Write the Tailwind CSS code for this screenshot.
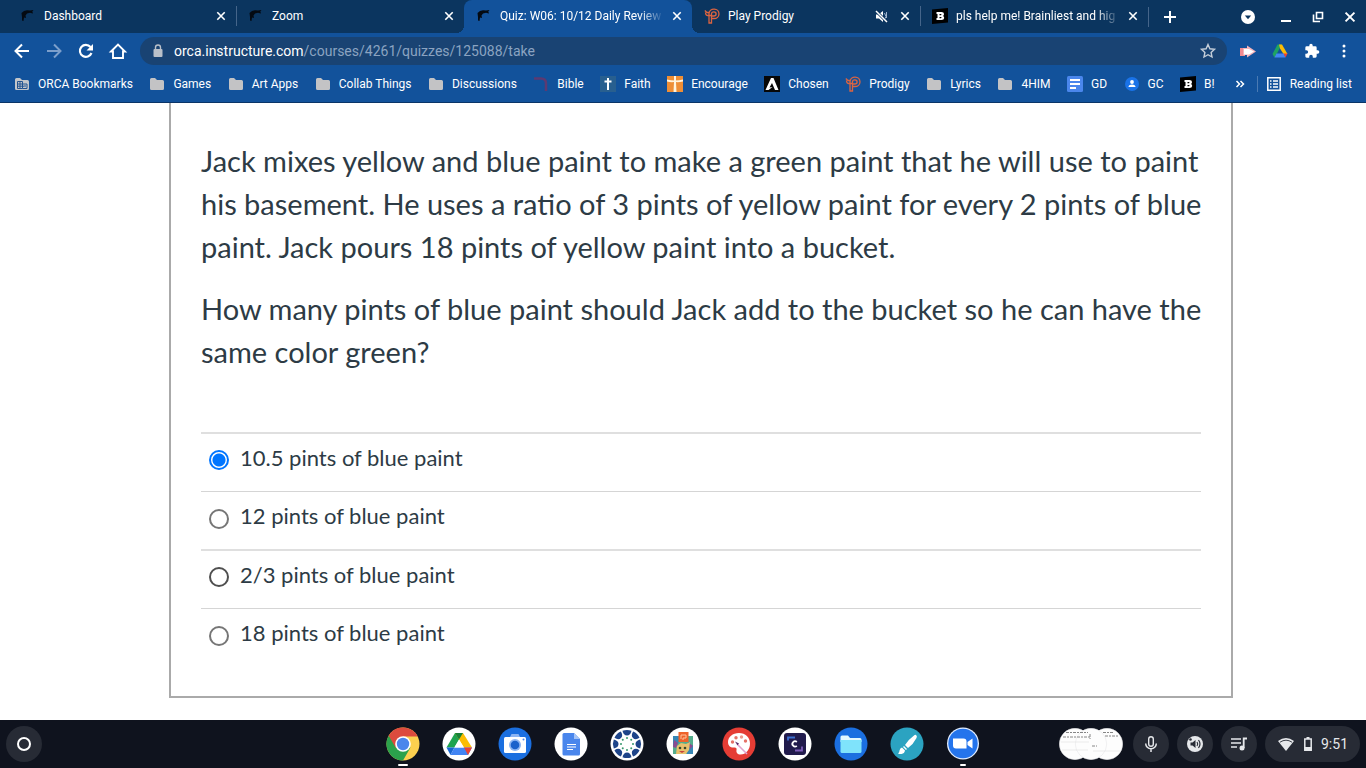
<!DOCTYPE html>
<html lang="en">
<head>
<meta charset="utf-8">
<title>Quiz: W06: 10/12 Daily Review</title>
<meta name="viewport" content="width=device-width, initial-scale=1">
<script src="https://cdn.jsdelivr.net/npm/@tailwindcss/browser@4"></script>
</head>
<body class="flex h-screen flex-col overflow-hidden bg-white font-['Roboto',sans-serif] text-xs text-white">

<!-- shared symbols -->
<svg class="hidden" aria-hidden="true">
  <symbol id="orca" viewBox="0 0 16 16"><path d="M1.500 5 4 3 7 2.200l3 .3 3.500-.5-1.200 1.500L13 5.500l-3-.7-3 .7-1.500 2L6 10l-2-.500L3.500 13 2 12.500V9z" fill="#040a12"/></symbol>
  <symbol id="x" viewBox="0 0 10 10"><path d="M1.300 1.300l7.400 7.400m0-7.400l-7.400 7.400" stroke="#fff" stroke-width="1.600" fill="none"/></symbol>
  <symbol id="folder" viewBox="0 0 16 16"><path d="M1 3.500Q1 2 2.500 2H6l2 2h5.500Q15 4 15 5.500v7q0 1.500-1.500 1.500h-11Q1 14 1 12.500z" fill="#c3c3c5"/></symbol>
  <symbol id="prodigy" viewBox="0 0 16 16"><path d="M.8 2.500 3 4.500H5.500M1.500 4.500Q1.500 7.500 4 7.500H7.500V15H5V5.500a5 4.700 0 1 1 5 5H7.500M7.500 8V5.800A2.300 2.100 0 1 1 9.800 8H7.500" fill="none" stroke="#dd6440" stroke-width="1.300"/></symbol>
  <symbol id="brainly" viewBox="0 0 16 16"><path d="M0 1.500 16 0v14.500L0 16z" fill="#000"/><path d="M4.500 4h5Q12 4 12 6 12 7.500 11 8q1.300.5 1.200 2-.2 2-2.700 2h-5v-2h1V6h-1zM7.500 6v1.300h1.200q.8 0 .8-.7T8.700 6zm0 3v1.300h1.200q.9 0 .9-.7T8.700 9z" fill="#fff" fill-rule="evenodd"/></symbol>
</svg>

<header class="shrink-0 border-b border-[#0a3467] bg-[#12529b]">
  <!-- tab strip -->
  <div class="flex h-[33px] bg-[#0b355f] pl-2">
    <div class="grid min-w-0 flex-1 grid-cols-5">
      <div class="flex min-w-0 items-center gap-2 pr-[10px] pb-px pl-3">
        <svg class="size-4 shrink-0"><use href="#orca"/></svg>
        <a href="#" class="min-w-0 flex-1 truncate">Dashboard</a>
        <button aria-label="Close Dashboard"><svg class="size-[10px]"><use href="#x"/></svg></button>
      </div>
      <div class="flex min-w-0 items-center gap-2 pr-[10px] pb-px">
        <span class="h-5 w-px bg-[#45658a]"></span>
        <svg class="ml-[3px] size-4 shrink-0"><use href="#orca"/></svg>
        <a href="#" class="min-w-0 flex-1 truncate">Zoom</a>
        <button aria-label="Close Zoom"><svg class="size-[10px]"><use href="#x"/></svg></button>
      </div>
      <div class="relative flex min-w-0 items-center gap-2 rounded-t-lg bg-[#12529b] pr-[10px] pb-px pl-3 before:absolute before:right-full before:bottom-0 before:size-2 before:bg-[radial-gradient(circle_at_0_0,transparent_8px,#12529b_8px)] after:absolute after:bottom-0 after:left-full after:size-2 after:bg-[radial-gradient(circle_at_100%_0,transparent_8px,#12529b_8px)]">
        <svg class="size-4 shrink-0"><use href="#orca"/></svg>
        <a href="#" class="min-w-0 flex-1 overflow-hidden whitespace-nowrap mask-r-from-85%">Quiz: W06: 10/12 Daily Review</a>
        <button aria-label="Close Quiz"><svg class="size-[10px]"><use href="#x"/></svg></button>
      </div>
      <div class="flex min-w-0 items-center gap-2 pr-[10px] pb-px pl-3">
        <svg class="size-4 shrink-0"><use href="#prodigy"/></svg>
        <a href="#" class="min-w-0 flex-1 truncate">Play Prodigy</a>
        <button aria-label="Unmute tab"><svg class="mr-1 size-[13px]" viewBox="0 0 13 13"><path d="M1 4.500h2.500L8 1v11L4 8.500H1z" fill="#fff"/><path d="M9.500 3q3 3.500 0 7M11.500 2v6" stroke="#9eb4cf" fill="none"/><path d="M0 0l13 13" stroke="#0b355f" stroke-width="3"/><path d="M1 1l11 11" stroke="#fff" stroke-width="1.500"/></svg></button>
        <button aria-label="Close Play Prodigy"><svg class="size-[10px]"><use href="#x"/></svg></button>
      </div>
      <div class="flex min-w-0 items-center gap-2 pr-[10px] pb-px">
        <span class="h-5 w-px bg-[#45658a]"></span>
        <svg class="ml-[3px] size-4 shrink-0"><use href="#brainly"/></svg>
        <a href="#" class="min-w-0 flex-1 overflow-hidden whitespace-nowrap mask-r-from-85%">pls help me! Brainliest and hig</a>
        <button aria-label="Close pls help me"><svg class="size-[10px]"><use href="#x"/></svg></button>
      </div>
    </div>
    <div class="flex w-[218px] shrink-0 items-center">
      <span class="h-5 w-px bg-[#45658a]"></span>
      <button class="ml-[15px]" aria-label="New tab"><svg class="size-3" viewBox="0 0 12 12"><path d="M6 0v12M0 6h12" stroke="#fff" stroke-width="2"/></svg></button>
      <div class="ml-auto flex items-center gap-5 pr-[10px]">
        <button class="mr-1" aria-label="Search tabs"><svg class="size-4" viewBox="0 0 16 16"><circle cx="8" cy="8" r="7" fill="#fff"/><path d="M4.800 6.500h6.400L8 10.200z" fill="#0b355f"/></svg></button>
        <button aria-label="Minimize"><svg class="size-3" viewBox="0 0 12 12"><path d="M1 10h10" stroke="#fff" stroke-width="2"/></svg></button>
        <button aria-label="Restore"><svg class="size-3" viewBox="0 0 12 12"><path d="M4.500 1.500H10.500V7.500H4.500zM1.500 3.500v7H8" fill="none" stroke="#fff" stroke-width="1.600"/></svg></button>
        <button aria-label="Close window"><svg class="size-3"><use href="#x"/></svg></button>
      </div>
    </div>
  </div>

  <!-- toolbar -->
  <div class="flex h-9 items-center pr-[14px] pl-3">
    <div class="flex gap-3">
      <button aria-label="Back"><svg class="size-5" viewBox="0 0 20 20"><path d="M17 10H4M10 3.500 3.500 10l6.500 6.500" fill="none" stroke="#fff" stroke-width="2"/></svg></button>
      <button aria-label="Forward"><svg class="size-5" viewBox="0 0 20 20"><path d="M3 10h13M10 3.500l6.500 6.500-6.500 6.500" fill="none" stroke="#7c9fcb" stroke-width="2"/></svg></button>
      <button aria-label="Reload"><svg class="size-5" viewBox="0 0 20 20"><path d="M15.500 12A6 6 0 1 1 14.500 6" fill="none" stroke="#fff" stroke-width="2.100"/><path d="M17 3v6.500h-6.500z" fill="#fff"/></svg></button>
      <button aria-label="Home"><svg class="size-5" viewBox="0 0 20 20"><path d="M3 10.500 10 3.500l7 7h-2V17H5v-6.500z" fill="none" stroke="#fff" stroke-width="1.900"/></svg></button>
    </div>
    <div class="ml-3 flex h-7 flex-1 items-center gap-[10px] rounded-full bg-[#194373] px-3">
      <svg class="h-4 w-3 shrink-0" viewBox="0 0 12 16"><path d="M3.500 7V4.500a2.500 2.500 0 0 1 5 0V7" fill="none" stroke="#b9c0c9" stroke-width="1.400"/><rect x="1.500" y="6" width="9" height="8" rx="1" fill="#b9c0c9"/></svg>
      <a href="#" class="flex-1 text-sm text-[#8ba3c1]"><span class="text-white">orca.instructure.com</span>/courses/4261/quizzes/125088/take</a>
      <button class="-mr-0.5" aria-label="Bookmark this page"><svg class="size-[18px]" viewBox="0 0 18 18"><path d="M9 2.500l1.900 4.300 4.600.5-3.400 3.100.9 4.600-4-2.300L5 15l.9-4.600-3.400-3.100 4.600-.5z" fill="none" stroke="#c5ced9" stroke-width="1.400"/></svg></button>
    </div>
    <div class="ml-3 flex items-center gap-4">
      <button aria-label="Screencast extension"><svg class="size-[17px]" viewBox="0 0 17 17"><path d="M1 5h5v8H1z" fill="#f28b91"/><path d="M4 5h4V2.500l9 6-9 6V12H4z" fill="#f5b3b9"/><path d="M5 6h5l5 2.500L10 11.500H5z" fill="#fff"/></svg></button>
      <button aria-label="Google Drive extension"><svg class="size-4" viewBox="0 0 16 16"><path d="M5.500 1.500h4L5 10.500l-2.500 4L.5 11z" fill="#1ea362"/><path d="M7 1.500h3l5.500 9.500h-4L8 5.500z" fill="#fbbc04"/><path d="M4.500 10.500h7.500l1.500 4H2.500z" fill="#4285f4"/><path d="M11.500 10.500h4L13.500 14.500z" fill="#ea4335"/></svg></button>
      <button aria-label="Extensions"><svg class="size-4" viewBox="0 0 24 24"><path d="M20.500 11H19V7a2 2 0 0 0-2-2h-4V3.500a2.500 2.500 0 0 0-5 0V5H4a2 2 0 0 0-2 2v3.800h1.500a2.700 2.700 0 0 1 0 5.400H2V20a2 2 0 0 0 2 2h3.800v-1.500a2.700 2.700 0 0 1 5.400 0V22H17a2 2 0 0 0 2-2v-4h1.500a2.500 2.500 0 0 0 0-5z" fill="#fff"/></svg></button>
      <button aria-label="Menu"><svg class="size-4" viewBox="0 0 16 16"><g fill="#fff"><circle cx="8" cy="3" r="1.500"/><circle cx="8" cy="8" r="1.500"/><circle cx="8" cy="13" r="1.500"/></g></svg></button>
    </div>
  </div>

  <!-- bookmarks -->
  <nav class="flex h-[33px] items-center pr-[14px] pb-1 pl-[14px] whitespace-nowrap">
    <div class="mr-5 flex flex-1 items-center justify-between">
      <a href="#" class="flex items-center gap-2"><svg class="size-4" viewBox="0 0 16 16"><path d="M1 3.500Q1 2 2.500 2H6l2 2h5.500Q15 4 15 5.500v7q0 1.500-1.500 1.500h-11Q1 14 1 12.500z" fill="#c3c6ca"/><path d="M3.500 5.500h5v7h-5zM8.500 8h4.500v4.500H8.500M3.500 8h5M3.500 10.200H10M6 5.500v7M11 9v2" fill="none" stroke="#235491"/></svg>ORCA Bookmarks</a>
      <a href="#" class="flex items-center gap-2"><svg class="size-4"><use href="#folder"/></svg>Games</a>
      <a href="#" class="flex items-center gap-2"><svg class="size-4"><use href="#folder"/></svg>Art Apps</a>
      <a href="#" class="flex items-center gap-2"><svg class="size-4"><use href="#folder"/></svg>Collab Things</a>
      <a href="#" class="flex items-center gap-2"><svg class="size-4"><use href="#folder"/></svg>Discussions</a>
      <a href="#" class="flex items-center gap-2"><svg class="size-4" viewBox="0 0 16 16"><path d="M1 2.500h7q5 0 5 5V15" fill="none" stroke="#5c3a72" stroke-width="2.500"/></svg>Bible</a>
      <a href="#" class="flex items-center gap-2"><svg class="size-4" viewBox="0 0 16 16"><path d="M0 0h16v16H0z" fill="#285f8f"/><path d="M8 2v12M4.500 5.500h7" stroke="#fff" stroke-width="2"/></svg>Faith</a>
      <a href="#" class="flex items-center gap-2"><svg class="size-4" viewBox="0 0 16 16"><path d="M0 0h16v16H0z" fill="#ee8e35"/><path d="M0 3.500q8 2 16 0v2q-5 1-7 .5l.500 10h-3L7 6Q4 6.500 0 5.500zM7 0h2v5H7z" fill="#fff3dc"/></svg>Encourage</a>
      <a href="#" class="flex items-center gap-2"><svg class="size-4" viewBox="0 0 16 16"><path d="M0 0h16v16H0z" fill="#070707"/><path d="M1.500 14 7 2h2.500l5 12h-3.500L8 7l-2.500 4.500 3-.5-4 3z" fill="#fff"/></svg>Chosen</a>
      <a href="#" class="flex items-center gap-2"><svg class="size-4"><use href="#prodigy"/></svg>Prodigy</a>
      <a href="#" class="flex items-center gap-2"><svg class="size-4"><use href="#folder"/></svg>Lyrics</a>
      <a href="#" class="flex items-center gap-2"><svg class="size-4"><use href="#folder"/></svg>4HIM</a>
      <a href="#" class="flex items-center gap-2"><svg class="size-4" viewBox="0 0 16 16"><rect width="16" height="16" rx="1.500" fill="#4a86ec"/><path d="M3 4h10M3 8h10M3 12h6" stroke="#fff" stroke-width="1.800"/></svg>GD</a>
      <a href="#" class="flex items-center gap-2"><svg class="size-4" viewBox="0 0 16 16"><circle cx="8" cy="8" r="7" fill="#1a73e8"/><circle cx="8" cy="6" r="1.900" fill="#fff"/><path d="M4.500 11q0-2.500 3.500-2.500t3.500 2.500z" fill="#fff"/></svg>GC</a>
      <a href="#" class="flex items-center gap-2"><svg class="size-4"><use href="#brainly"/></svg>B!</a>
    </div>
    <button class="mr-1" aria-label="More bookmarks"><svg class="size-[10px]" viewBox="0 0 10 10"><path d="M1.500 2 4.500 5l-3 3M5.500 2l3 3-3 3" fill="none" stroke="#fff" stroke-width="1.500"/></svg></button>
    <span class="mx-2 h-4 w-px bg-[#4a7ab3]"></span>
    <button class="flex items-center gap-2"><svg class="size-4" viewBox="0 0 16 16"><path d="M1.800 1.800h12.400v12.400H1.800zM4 5h1.500M4 8h1.500M4 11h1.500M7 5h5M7 8h5M7 11h5" fill="none" stroke="#fff" stroke-width="1.500"/></svg>Reading list</button>
  </nav>
</header>

<!-- quiz question -->
<main class="min-h-0 flex-1 overflow-hidden bg-white pr-[133px] pl-[169px] font-['Lato',sans-serif] text-[#2d3b45]">
  <form class="border-2 border-t-0 border-[#aaa] px-[30px] pt-9 pb-[30px]">
    <div class="-mr-4 space-y-[19px] text-[29px] leading-[43px]">
      <p>Jack mixes yellow and blue paint to make a green paint that he will use to paint his basement. He uses a ratio of 3 pints of yellow paint for every 2 pints of blue paint. Jack pours 18 pints of yellow paint into a bucket.</p>
      <p>How many pints of blue paint should Jack add to the bucket so he can have the same color green?</p>
    </div>
    <div role="radiogroup" aria-label="Answer" class="mt-[59px] text-[22px] leading-[48px]">
      <div class="flex h-[59px] items-start border-t-2 border-[#dfdfdf] pl-2">
        <input type="radio" name="answer" id="a1" checked class="mt-4 size-5 shrink-0 appearance-none rounded-full border-2 border-[#0075ff] bg-[radial-gradient(circle,#0075ff_6px,transparent_7px)]">
        <label for="a1" class="flex-1 pl-[11px]">10.5 pints of blue paint</label>
      </div>
      <div class="flex h-[58px] items-start border-t border-[#d5d5d5] pl-2">
        <input type="radio" name="answer" id="a2" class="mt-[17px] size-5 shrink-0 appearance-none rounded-full border-2 border-[#767676]">
        <label for="a2" class="flex-1 pl-[11px]">12 pints of blue paint</label>
      </div>
      <div class="flex h-[59px] items-start border-t-2 border-[#dfdfdf] pl-2">
        <input type="radio" name="answer" id="a3" class="mt-4 size-5 shrink-0 appearance-none rounded-full border-2 border-[#4f4f4f]">
        <label for="a3" class="flex-1 pl-[11px]">2/3 pints of blue paint</label>
      </div>
      <div class="flex h-[58px] items-start border-t border-[#d5d5d5] pl-2">
        <input type="radio" name="answer" id="a4" class="mt-[17px] size-5 shrink-0 appearance-none rounded-full border-2 border-[#767676]">
        <label for="a4" class="flex-1 pl-[11px]">18 pints of blue paint</label>
      </div>
    </div>
  </form>
</main>

<!-- shelf -->
<footer class="grid h-12 shrink-0 grid-cols-[1fr_auto_1fr] items-center bg-[#0f131e] px-[6px]">
  <button aria-label="Launcher" class="flex size-9 items-center justify-center rounded-full bg-[#272b35]"><span class="size-[14px] rounded-full border-2 border-white"></span></button>

  <div class="flex gap-[22px]">
    <button aria-label="Chrome" class="relative">
      <svg class="size-[34px]" viewBox="0 0 34 34"><circle cx="17" cy="17" r="16.500" fill="#fcd04f"/><path d="M17 17 2.700 8.750A16.500 16.500 0 0 0 17 33.500l7.500-13z" fill="#2ba24c"/><path d="M17 17v-7.500h14.700A16.500 16.500 0 0 0 2.700 8.750l7 12z" fill="#dc4b3e"/><circle cx="17" cy="17" r="7.800" fill="#fff"/><circle cx="17" cy="17" r="6.200" fill="#4a86ec"/></svg>
      <span class="absolute top-[37px] left-3 h-0.5 w-[10px] rounded-full bg-white"></span>
    </button>
    <button aria-label="Google Drive"><svg class="size-[34px]" viewBox="0 0 34 34"><circle cx="17" cy="17" r="16.500" fill="#fff"/><path d="M13 6h8l-8.500 14.500H4.500z" fill="#1ea350"/><path d="M13 6h8l9 14.500h-8z" fill="#fbbc04"/><path d="M13 6h8L17 12.500z" fill="#188038"/><path d="M4.500 20.500h8L8.500 28z" fill="#1967d2"/><path d="M12.500 20.500H30L26 28H8.500z" fill="#4285f4"/><path d="M22 20.500h8L26 28z" fill="#ea4335"/><path d="M17 12.500 21.800 20.500h-9.500z" fill="#fff"/></svg></button>
    <button aria-label="Camera"><svg class="size-[34px]" viewBox="0 0 34 34"><circle cx="17" cy="17" r="16.500" fill="#1b6fe0"/><path d="M12 10l1.500-3h7l1.500 3z" fill="#8db5f3"/><rect x="6" y="10" width="22" height="16" rx="1.500" fill="#fff"/><circle cx="17" cy="18" r="6" fill="#8db5f3"/><circle cx="17" cy="18" r="4.300" fill="#1b62cc"/><circle cx="25.500" cy="12.500" r="1" fill="#4a86ec"/></svg></button>
    <button aria-label="Google Docs"><svg class="size-[34px]" viewBox="0 0 34 34"><circle cx="17" cy="17" r="16.500" fill="#fff"/><path d="M8.500 7.500Q8.500 6 10 6h10l6 6v15q0 1.500-1.500 1.500H10q-1.500 0-1.500-1.500z" fill="#4a86ec"/><path d="M20 6l6 6h-6z" fill="#a5c4f7"/><path d="M13 17.500h9M13 20h9M13 22.500h6" stroke="#fff" stroke-width="1.200"/></svg></button>
    <button aria-label="Canvas"><svg class="size-[34px]" viewBox="0 0 34 34"><circle cx="17" cy="17" r="16.500" fill="#fff"/><g fill="#1d4489"><g id="petals"><path d="M12.500 3.800Q17 2 21.500 3.800 20.500 8.500 17 8.500T12.500 3.800z"/><path d="M12.500 30.200Q17 32 21.500 30.200 20.500 25.500 17 25.500T12.500 30.200z"/><path d="M3.800 12.500Q2 17 3.800 21.500 8.500 20.500 8.500 17T3.800 12.500z"/><path d="M30.200 12.500Q32 17 30.200 21.500 25.500 20.500 25.500 17T30.200 12.500z"/></g><use href="#petals" transform="rotate(45 17 17)"/></g><g fill="#35976d"><g id="dots"><circle cx="17" cy="11" r="1"/><circle cx="17" cy="23" r="1"/><circle cx="11" cy="17" r="1"/><circle cx="23" cy="17" r="1"/></g><use href="#dots" transform="rotate(45 17 17)"/></g></svg></button>
    <button aria-label="Prodigy game"><svg class="size-[34px]" viewBox="0 0 34 34"><circle cx="17" cy="17" r="16.500" fill="#fff"/><path d="M7 9h20v18H7z" fill="#54ad8d"/><path d="M7 9h6v6l-4 5-2-2zM21 21l6-3v9h-6z" fill="#3686b5"/><path d="M8 13l4 3-2 5-3-1zM22 15l5 4-3 3z" fill="#8b4b8f"/><path d="M10 27l1-8 4-3 5 1 4-2-1 8-3 4z" fill="#e8c06d"/><path d="M12.500 5h10v10h-10z" fill="#ee632c"/><path d="M15 8h5v3h-3v2M15 8v4" fill="none" stroke="#ffc49d"/><circle cx="14" cy="21" r="1.300" fill="#3a472a"/><circle cx="19" cy="21" r="1.300" fill="#3a472a"/><path d="M13 24h6l-3 2z" fill="#c8403b"/></svg></button>
    <button aria-label="Paint"><svg class="size-[34px]" viewBox="0 0 34 34"><circle cx="17" cy="17" r="16.500" fill="#e53d35"/><path d="M17 6C10.500 6 6 10 6 15c0 4 3 6 6 5.500 2-.3 3 .5 2.500 2.500-.5 2.500 1 4.500 4 4.500 5.500 0 9.500-5 9.500-11S23.500 6 17 6z" fill="#fff"/><circle cx="10.500" cy="15" r="1.700" fill="#e57368"/><circle cx="14" cy="10.800" r="1.700" fill="#e57368"/><circle cx="19.500" cy="10" r="1.700" fill="#ef9b8f"/><circle cx="23.500" cy="14" r="1.700" fill="#e57368"/><path d="M15 17l10 10" stroke="#e0a3cd" stroke-width="1.600"/><path d="M13 14.500l4 2-1.500 1.800z" fill="#552b68"/></svg></button>
    <button aria-label="Screencastify"><svg class="size-[34px]" viewBox="0 0 34 34"><circle cx="17" cy="17" r="16.500" fill="#fff"/><rect x="6" y="6" width="22" height="22" rx="3" fill="#211b4c"/><path d="M10 13.500V10.500h7" fill="none" stroke="#3a6fd0" stroke-width="1.800"/><path d="M24 19.500v4h-7" fill="none" stroke="#7d5cb8" stroke-width="1.800"/><path d="M18.800 15a2.600 2.600 0 1 0 0 3.800" fill="none" stroke="#fff" stroke-width="1.800"/></svg></button>
    <button aria-label="Files"><svg class="size-[34px]" viewBox="0 0 34 34"><circle cx="17" cy="17" r="16.500" fill="#1b6fe0"/><path d="M6.500 10q0-1.500 1.500-1.500h6l2 2.500h10q1.500 0 1.500 1.500V15h-21z" fill="#e3f8ff"/><path d="M6.500 13h21v11.500q0 1.500-1.500 1.500H8q-1.500 0-1.500-1.500z" fill="#7fe3fb"/></svg></button>
    <button aria-label="Canvas drawing"><svg class="size-[34px]" viewBox="0 0 34 34"><circle cx="17" cy="17" r="16.500" fill="#2ba3c1"/><path d="M26 8q1.500 1 .5 3-3 6-8.500 10l-3-3Q19 12 24 8.500q1-1 2-.5zM14 19l3 3-1 1-3-3zM12 20.500l3 3q-.500 3-3.500 3.500-2 .3-3.500-.500 1.500-1 1.500-3 .500-2.500 2.500-3z" fill="#fff"/></svg></button>
    <button aria-label="Zoom" class="relative">
      <svg class="size-[34px]" viewBox="0 0 34 34"><circle cx="17" cy="16.500" r="16" fill="#e1edff"/><circle cx="17" cy="16.500" r="14.700" fill="#2474ec"/><path d="M7 11.500h10.500q3 0 3 3v7H10q-3 0-3-3zM21.500 15l5-3.500v10L21.500 18z" fill="#fff"/></svg>
      <span class="absolute top-[37px] left-[14px] h-0.5 w-[6px] rounded-full bg-white"></span>
    </button>
  </div>

  <div class="flex items-center justify-end gap-2">
    <button aria-label="Recent screenshots" class="mr-0.5"><svg class="h-8 w-16" viewBox="0 0 64 32"><g fill="#fdfdfd" stroke="#e3e3e5" stroke-width=".5"><circle cx="16" cy="16" r="15.700"/><circle cx="48" cy="16" r="15.700"/><circle cx="32" cy="16" r="15.700"/></g><path d="M7 4.500h22M4 9h27M31 6v5M44 4.500h10M46 8h14M33 18h5" stroke="#555" stroke-width="1" stroke-dasharray="3 1 2 1" opacity=".7"/><path d="M2 14h28M3 22h26M34 23h28" stroke="#e2e2e2" stroke-width=".7"/></svg></button>
    <button aria-label="Microphone" class="flex size-9 items-center justify-center rounded-full bg-[#272b35]"><svg class="size-5" viewBox="0 0 20 20"><rect x="7.700" y="2.700" width="4.600" height="9.600" rx="2.300" fill="none" stroke="#e6e8eb" stroke-width="1.400"/><path d="M4.700 9.500a5.300 5.300 0 0 0 10.600 0M10 15v3" fill="none" stroke="#e6e8eb" stroke-width="1.500"/></svg></button>
    <button aria-label="Select to speak" class="flex size-9 items-center justify-center rounded-full bg-[#272b35]"><svg class="size-5" viewBox="0 0 20 20"><circle cx="10" cy="10" r="8" fill="#e6e8eb"/><path d="M5.500 8.500h2L10.500 6v8l-3-2.500h-2z" fill="#272b35"/><path d="M12 8q1.500 2 0 4M13.500 6q3 4 0 8" fill="none" stroke="#272b35" stroke-width="1.200"/><circle cx="5.500" cy="5.500" r="1.300" fill="#272b35"/></svg></button>
    <button aria-label="Media controls" class="flex size-9 items-center justify-center rounded-full bg-[#272b35]"><svg class="size-5" viewBox="0 0 20 20"><path d="M2 5h10M2 9h10M2 13h6" stroke="#e6e8eb" stroke-width="1.600"/><path d="M14.700 14V4.500H18" fill="none" stroke="#e6e8eb" stroke-width="1.800"/><circle cx="13" cy="14" r="2.500" fill="#e6e8eb"/></svg></button>
    <button class="flex h-9 items-center rounded-full bg-[#272b35] px-3 text-sm text-[#e6e8eb]" aria-label="Status, 9:51">
      <svg class="size-[18px]" viewBox="0 0 18 18"><path d="M1 6Q9 0 17 6L9 16z" fill="#e6e8eb"/><path d="M3 7.200q6-4 12 0" fill="none" stroke="#272b35" stroke-width=".9"/></svg>
      <svg class="mr-1 ml-1 h-4 w-[18px]" viewBox="0 0 18 16"><path d="M5.800 3h6.400v11.200H5.800z" fill="none" stroke="#e6e8eb" stroke-width="1.500"/><path d="M7.500 1h3v2h-3zM5.500 11h7v3h-7z" fill="#e6e8eb"/></svg>
      9:51
    </button>
  </div>
</footer>
</body>
</html>
